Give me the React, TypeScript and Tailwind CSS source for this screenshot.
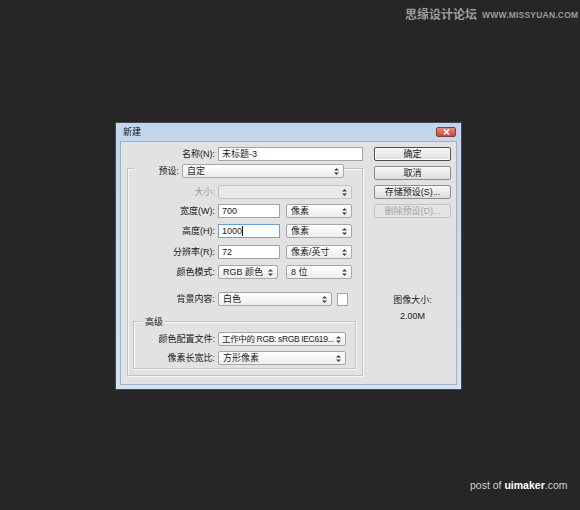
import React from "react";

const FONT = { fontFamily: "'Liberation Sans', 'Noto Sans CJK SC', sans-serif" };

function Arrows() {
  return (
    <svg width="5" height="7" viewBox="0 0 5 7" className="shrink-0">
      <path d="M2.5 0 L5 2.6 L0 2.6 Z" fill="#444" />
      <path d="M2.5 7 L5 4.4 L0 4.4 Z" fill="#444" />
    </svg>
  );
}

function Select({ w, value, disabled, tight }: { w: string; value: string; disabled?: boolean; tight?: boolean }) {
  return (
    <div
      className={`${w} h-[14px] flex items-center justify-between pr-[4px] border rounded-[2px] ${tight ? "pl-[3px]" : "pl-[4px]"} ${
        disabled
          ? "border-[#c4c4c4] bg-[#e8e8e8] text-[#9a9a9a]"
          : "border-[#a6a6a6] bg-gradient-to-b from-white to-[#ededed] text-[#1e1e1e]"
      }`}
    >
      <span className={`min-w-0 overflow-hidden whitespace-nowrap ${tight ? "text-[8.5px] tracking-[-0.35px]" : ""}`}>{value}</span>
      <Arrows />
    </div>
  );
}

function Input({ w, value, focused }: { w: string; value: string; focused?: boolean }) {
  return (
    <div
      className={`${w} h-[14px] flex items-center pl-[3px] bg-white border ${
        focused ? "border-[#6f9fd4]" : "border-[#a3a3a3]"
      }`}
    >
      <span>{value}</span>
      {focused && <span className="w-px h-[10px] bg-[#111]" />}
    </div>
  );
}

function Row({ label, lw, mt, children, disabled }: { label: string; lw: string; mt: string; children: React.ReactNode; disabled?: boolean }) {
  return (
    <div className={`flex items-center ${mt}`}>
      <span className={`${lw} text-right pr-[3px] whitespace-nowrap ${disabled ? "text-[#9c9c9c]" : ""}`}>{label}</span>
      {children}
    </div>
  );
}

function Btn({ label, primary, disabled, mt }: { label: string; primary?: boolean; disabled?: boolean; mt?: string }) {
  return (
    <div
      className={`w-[77px] h-[14px] flex items-center justify-center rounded-[2px] border ${mt ?? ""} ${
        disabled
          ? "border-[#c2c2c2] bg-[#e4e4e4] text-[#a4a4a4]"
          : primary
          ? "border-[#4d4d4d] bg-gradient-to-b from-[#f8f8f8] to-[#dcdcdc] shadow-[inset_0_0_0_1px_#ffffff]"
          : "border-[#8c8c8c] bg-gradient-to-b from-[#f8f8f8] to-[#dcdcdc]"
      }`}
    >
      {label}
    </div>
  );
}

export default function App() {
  return (
    <div className="w-[580px] h-[510px] bg-[#262626] relative overflow-hidden" style={FONT}>
      {/* watermark top */}
      <div className="absolute top-[8px] left-[405px] flex items-center gap-[5px] text-[#9b9b9b] font-bold whitespace-nowrap">
        <span className="text-[12px] leading-[14px]">思缘设计论坛</span>
        <span className="text-[8.5px] leading-[14px] tracking-[0.2px]">WWW.MISSYUAN.COM</span>
      </div>

      <div className="pt-[122px] pl-[115px]">
        {/* dialog */}
        <div className="w-[347px] h-[268px] flex flex-col border border-[#3f4a56] bg-gradient-to-b from-[#c2d6ec] to-[#d3e3f3] px-[4px] pb-[4px] text-[9px] leading-[14px] text-[#1a1a1a]">
          {/* title bar */}
          <div className="h-[18px] flex items-center justify-between pl-[3px]">
            <span className="text-[9px] text-[#111]">新建</span>
            <div className="w-[20px] h-[10px] mr-[1px] rounded-[2px] bg-gradient-to-b from-[#e48a80] to-[#c4463a] border border-[#8e3a32] flex items-center justify-center">
              <svg width="7" height="6" viewBox="0 0 7 6">
                <path d="M1 0.5 L6 5.5 M6 0.5 L1 5.5" stroke="#fff" strokeWidth="1.6" />
              </svg>
            </div>
          </div>

          {/* content */}
          <div className="flex-1 flex bg-[#e2e2e2] border border-[#9fb2c6]">
            {/* left column */}
            <div className="w-[243px] pt-[5px] flex flex-col">
              <Row label="名称(N):" lw="w-[97px]" mt="">
                <Input w="w-[145px]" value="未标题-3" />
              </Row>

              {/* preset group */}
              <div className="ml-[6px] mt-[7px] w-[236px] h-[208px] border border-[#c3c3c3] shadow-[1px_1px_0_#f6f6f6,inset_1px_1px_0_#f6f6f6] flex flex-col">
                <div className="flex items-center -mt-[5px] pl-[6px]">
                  <span className="w-[48px] text-right pr-[3px] bg-[#e2e2e2]">预设:</span>
                  <Select w="w-[162px]" value="自定" />
                </div>

                <Row label="大小:" lw="w-[90px]" mt="mt-[7px]" disabled>
                  <Select w="w-[134px]" value="" disabled />
                </Row>

                <Row label="宽度(W):" lw="w-[90px]" mt="mt-[5px]">
                  <Input w="w-[62px]" value="700" />
                  <div className="w-[6px]" />
                  <Select w="w-[66px]" value="像素" />
                </Row>

                <Row label="高度(H):" lw="w-[90px]" mt="mt-[6px]">
                  <Input w="w-[62px]" value="1000" focused />
                  <div className="w-[6px]" />
                  <Select w="w-[66px]" value="像素" />
                </Row>

                <Row label="分辨率(R):" lw="w-[90px]" mt="mt-[7px]">
                  <Input w="w-[62px]" value="72" />
                  <div className="w-[6px]" />
                  <Select w="w-[66px]" value="像素/英寸" />
                </Row>

                <Row label="颜色模式:" lw="w-[90px]" mt="mt-[6px]">
                  <Select w="w-[60px]" value="RGB 颜色" />
                  <div className="w-[8px]" />
                  <Select w="w-[66px]" value="8 位" />
                </Row>

                <Row label="背景内容:" lw="w-[90px]" mt="mt-[13px]">
                  <Select w="w-[114px]" value="白色" />
                  <div className="w-[5px]" />
                  <div className="w-[11px] h-[13px] bg-white border border-[#a3a3a3]" />
                </Row>

                {/* advanced group */}
                <div className="ml-[5px] mt-[15px] w-[223px] h-[48px] border border-[#c3c3c3] shadow-[1px_1px_0_#f6f6f6,inset_1px_1px_0_#f6f6f6] flex flex-col">
                  <span className="w-fit -mt-[7px] ml-[9px] px-[2px] bg-[#e2e2e2]">高级</span>
                  <Row label="颜色配置文件:" lw="w-[84px]" mt="mt-[3px]">
                    <Select w="w-[128px]" value="工作中的 RGB: sRGB IEC619..." tight />
                  </Row>
                  <Row label="像素长宽比:" lw="w-[84px]" mt="mt-[5px]">
                    <Select w="w-[128px]" value="方形像素" />
                  </Row>
                </div>
              </div>
            </div>

            {/* right column */}
            <div className="ml-[10px] pt-[5px] flex flex-col">
              <Btn label="确定" primary />
              <Btn label="取消" mt="mt-[5px]" />
              <Btn label="存储预设(S)..." mt="mt-[5px]" />
              <Btn label="删除预设(D)..." disabled mt="mt-[5px]" />
              <div className="mt-[75px] w-[77px] flex flex-col items-center">
                <span>图像大小:</span>
                <span className="mt-[2px]">2.00M</span>
              </div>
            </div>
          </div>
        </div>
      </div>

      {/* watermark bottom */}
      <div className="absolute top-[478px] left-[470px] text-[10.5px] leading-[14px] text-[#cfcfcf] whitespace-nowrap">
        post of <span className="font-bold text-white">uimaker</span>.com
      </div>
    </div>
  );
}
